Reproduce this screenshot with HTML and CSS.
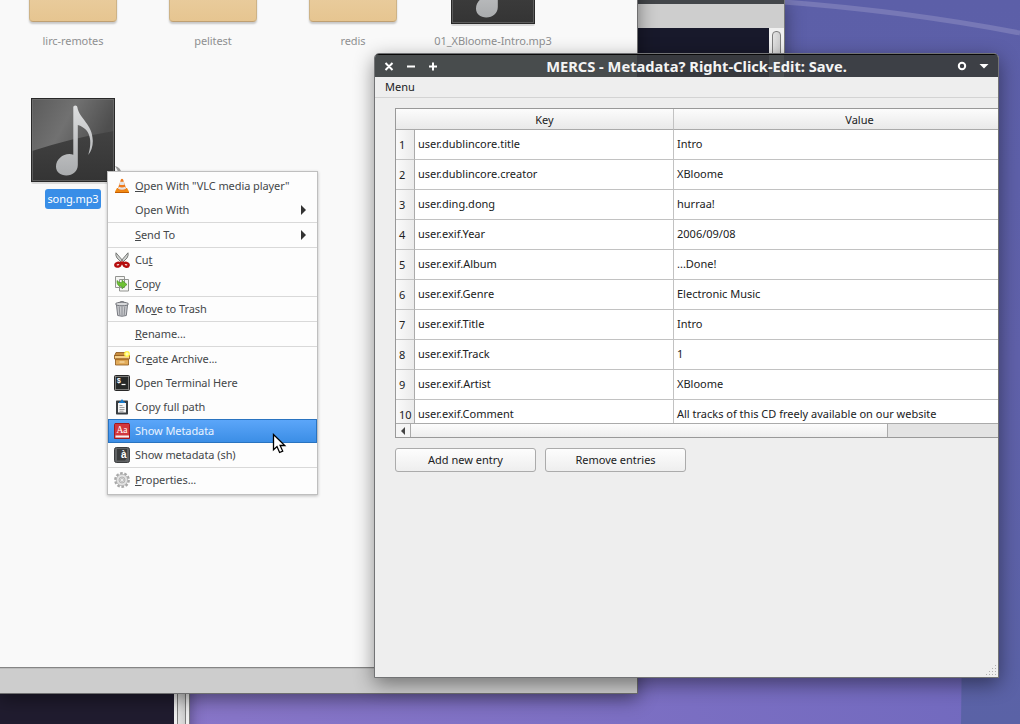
FILE: index.html
```html
<!DOCTYPE html>
<html lang="en">
<head>
<meta charset="utf-8">
<title>Desktop</title>
<link rel="stylesheet" href="styles.css">
</head>
<body>
<main class="desktop">
  <svg class="wallpaper" width="1020" height="724" viewBox="0 0 1020 724">
    <defs>
      <linearGradient id="wall" x1="0" y1="724" x2="1020" y2="300" gradientUnits="userSpaceOnUse"><stop offset="0" stop-color="#8c77cb"/><stop offset=".2" stop-color="#8775c8"/><stop offset=".85" stop-color="#7169be"/><stop offset="1" stop-color="#6c68b8"/></linearGradient>
      <linearGradient id="side" x1="0" y1="0" x2="0" y2="1"><stop offset="0" stop-color="#5c5fa8"/><stop offset=".5" stop-color="#6061aa"/><stop offset="1" stop-color="#5a62a6"/></linearGradient>
      <linearGradient id="note" x1="0" y1="0" x2="0" y2="1"><stop offset="0" stop-color="#dedfe0"/><stop offset="1" stop-color="#a9abad"/></linearGradient>
      <linearGradient id="tile" x1="0" y1="0" x2="0" y2="1"><stop offset="0" stop-color="#4b4b4b"/><stop offset="1" stop-color="#343434"/></linearGradient>
      <linearGradient id="shine" x1="0" y1="0" x2="1" y2=".35"><stop offset="0" stop-color="#5b5b5b"/><stop offset=".5" stop-color="#717171"/><stop offset="1" stop-color="#4e4e4e"/></linearGradient>
    </defs>
    <rect width="1020" height="724" fill="url(#wall)"/>
    <path d="M700 0h320v724H961q1-70 1-150L700 500z" fill="url(#side)"/>
    <path d="M770 1Q900 10 1020 33" fill="none" stroke="#7778b6" stroke-width="5"/>
  </svg>

  <section class="window terminal-top">
    <div class="term-title"></div>
    <div class="term-menu"></div>
    <div class="term-body"><div class="term-screen"></div><div class="term-scroll"><i class="knob"></i></div></div>
  </section>
  <section class="window terminal-bottom"><div class="term-screen"></div><div class="term-scroll"><i class="knob long"></i></div></section>

  <section class="window files">
    <div class="view">
      <div class="row row-first">
        <div class="file"><i class="folder"></i><span>lirc-remotes</span></div>
        <div class="file"><i class="folder"></i><span>pelitest</span></div>
        <div class="file"><i class="folder"></i><span>redis</span></div>
        <div class="file"><svg class="music" width="86" height="87"><use href="#music"/></svg><span>01_XBloome-Intro.mp3</span></div>
      </div>
      <div class="row">
        <div class="file selected">
          <svg class="music" width="86" height="87" viewBox="0 0 86 87">
            <g id="music">
              <rect x="1" y="4" width="84" height="83" rx="2" fill="#000" opacity=".12"/>
              <rect x="1.500" y="1.500" width="83" height="83" fill="url(#tile)" stroke="#292929"/>
              <path d="M2 2h82v32Q42 41 2 54z" fill="url(#shine)"/>
              <rect x="2.500" y="2.500" width="81" height="81" fill="none" stroke="#777" stroke-opacity=".6"/>
              <path d="M43.300 10q0-1.500 2-1.500t2 1.500c2 12 15.500 17 15.500 34q0 8-4.500 14c4-13 3-26-10.500-30v40c0 6-5 10.500-11.500 10.500-6 0-10.300-3.500-10.300-9 0-7 6.500-12.500 13.300-12.500 1.600 0 2.800.3 4 .8z" fill="url(#note)"/>
            </g>
          </svg>
          <span>song.mp3</span>
        </div>
      </div>
    </div>
    <div class="status"></div>
  </section>
  <svg class="peek" width="10" height="10" viewBox="0 0 10 10"><path d="M0 1q6 1 7 9H4Q3 5 0 1z" fill="#999"/></svg>

  <nav class="menu">
    <div class="item"><svg class="ico" viewBox="0 0 16 16"><path d="M1 13.500 3 10h10l2 3.500v1.500H1z" fill="#f08a12"/><path d="M1 14.500h14" stroke="#c35c00"/><path d="M7 1.200q1-1 2 0L12.500 11.500q-4.500 2.500-9 0z" fill="#ee7a1c"/><path d="m6.200 3.500-.9 3q2.700 1 5.400 0l-.9-3q-1.800.7-3.600 0zM4.700 8.700l-.7 2q4 2 8 0l-.7-2q-3.300 1.500-6.600 0z" fill="#e4e4e4"/></svg><span><u>O</u>pen With "VLC media player"</span></div>
    <div class="item"><i class="ico"></i><span>Open With</span><i class="arrow"></i></div>
    <hr>
    <div class="item"><i class="ico"></i><span><u>S</u>end To</span><i class="arrow"></i></div>
    <hr>
    <div class="item"><svg class="ico" viewBox="0 0 16 16"><path d="M2 .8Q1.300 3.500 3 6l5 5 1.500-1.500zM14 .8q.7 2.700-1 5.200l-5 5-1.500-1.500z" fill="#d0d2d0" stroke="#6c6e6b" stroke-width=".9"/><g fill="#f5dada" stroke="#b50d0d" stroke-width="2.400"><ellipse cx="3.900" cy="12.700" rx="2.600" ry="1.900" transform="rotate(-15 3.900 12.700)"/><ellipse cx="12.100" cy="12.700" rx="2.600" ry="1.900" transform="rotate(15 12.100 12.700)"/></g><path d="m5 11 3-2 3 2-3 2z" fill="#b50d0d"/></svg><span>Cu<u>t</u></span></div>
    <div class="item"><svg class="ico" viewBox="0 0 16 16"><path d="M1.500.5h9v11h-9zM5.500 3.500h9v11.500h-9z" fill="#f5f5f3" stroke="#929490"/><path d="M3 4.500q-.5 6 5 6v2.300l5-4.300-5-4.300v2.500Q4.800 7 3 4.500z" fill="#6fc234" stroke="#3e861b" stroke-width=".6"/></svg><span><u>C</u>opy</span></div>
    <hr>
    <div class="item"><svg class="ico" viewBox="0 0 16 16"><path d="M2.500 4h11l-1.200 10.500q-4.300 1.500-8.600 0z" fill="#c8c9cc" stroke="#777980"/><path d="M5.200 5.500 5.800 14M8 5.500v9M10.800 5.500l-.6 8.500" stroke="#85878d" stroke-width=".9"/><ellipse cx="8" cy="3" rx="6.500" ry="1.800" fill="#d8d9db" stroke="#74767c"/><path d="M5.500 2q0-1.500 2.500-1.500T10.500 2" fill="none" stroke="#74767c"/></svg><span>Mo<u>v</u>e to Trash</span></div>
    <hr>
    <div class="item"><i class="ico"></i><span><u>R</u>ename...</span></div>
    <hr>
    <div class="item"><svg class="ico" viewBox="0 0 16 16"><path d="M2 1.500h11l2.500 3.500H.5z" fill="#c98d3e" stroke="#8a5417" stroke-width=".8"/><path d="M.5 4.500h15v3.500H.5z" fill="#f6d08a" stroke="#8a5417" stroke-width=".8"/><path d="M1.500 8h13v6h-13z" fill="#e2ac5b" stroke="#8a5417" stroke-width=".8"/><path d="M2 8.700h12" stroke="#a6641c" stroke-width=".8"/><path d="M5.500 11h5" stroke="#fbe6bb"/><circle cx="13" cy="3" r="2.900" fill="#fff13a"/><path d="m13 0 .8 2.200L16 3l-2.200.8L13 6l-.8-2.200L10 3l2.200-.8z" fill="#fffcc0"/></svg><span>Cr<u>e</u>ate Archive...</span></div>
    <div class="item"><svg class="ico" viewBox="0 0 16 16"><rect x=".5" y=".5" width="15" height="15" rx="1" fill="#8f8f8d" stroke="#272727"/><path d="M1.800 1.800h12.400v12.400H1.800z" fill="#252827"/><text x="2.800" y="8.300" class="dollar">$</text><path d="M7.500 9.500h4" stroke="#fff" stroke-width="1.200"/></svg><span>Open Terminal Here</span></div>
    <div class="item"><svg class="ico" viewBox="0 0 16 16"><rect x="2" y="1.500" width="12" height="14" rx=".7" fill="#393d40"/><path d="M4 4h8v9.500H4z" fill="#f5f5f5"/><path d="M5.500 6.500h3M5.500 8.500h5M5.500 10.500h5M5.500 12.200h4" stroke="#959595" stroke-width=".9"/><path d="M5 4V2.800h1.300L8 0l1.700 2.800H11V4z" fill="#1479cb"/></svg><span>Copy full path</span></div>
    <div class="item active"><svg class="ico" viewBox="0 0 16 16"><path d="M.5 1.500 1 .5h14l.5 1v14H.5z" fill="#d2383d" stroke="#a0191f"/><path d="M1.500 12.500h13.500v2h-13.500z" fill="#f4f1f1"/><text x="2.400" y="9.500" class="aa">Aa</text></svg><span>Show Metadata</span></div>
    <div class="item"><svg class="ico" viewBox="0 0 16 16"><rect x=".5" y=".5" width="15" height="15" rx="2" fill="#606264" stroke="#3b3d3f"/><path d="M3 2h10v9l-2 2.500H3z" fill="#3a3c3d"/><text x="6.900" y="11" class="agrave">à</text></svg><span>Show metadata (sh)</span></div>
    <hr>
    <div class="item"><svg class="ico" viewBox="0 0 16 16"><circle cx="8" cy="8" r="6.600" fill="none" stroke="#a8a8a8" stroke-width="2.600" stroke-dasharray="2.600 1.547"/><circle cx="8" cy="8" r="5.700" fill="#e2e2e2" stroke="#b0b0b0" stroke-width=".8"/><circle cx="8" cy="8" r="3" fill="#d6d6d6" stroke="#acacac" stroke-width=".8"/><circle cx="8" cy="8" r="1.500" fill="#fafafa" stroke="#aaa" stroke-width=".6"/></svg><span><u>P</u>roperties...</span></div>
  </nav>

  <section class="window mercs">
    <header class="titlebar">
      <svg class="controls" width="64" height="23" viewBox="0 0 64 23"><path d="m10.500 8 7 7m0-7-7 7M32 11.500h8M54 11.500h8M58 7.500v8" stroke="#fff" stroke-width="2" fill="none"/></svg>
      <h1>MERCS - Metadata? Right-Click-Edit: Save.</h1>
      <svg class="controls-right" width="46" height="23" viewBox="0 0 46 23"><circle cx="10" cy="11" r="3.200" fill="none" stroke="#fff" stroke-width="2"/><path d="M27.500 9h9L32 13.500z" fill="#fff"/></svg>
    </header>
    <div class="menubar">Menu</div>
    <div class="content">
      <div class="table-frame">
        <div class="grid">
          <div class="head"></div><div class="head">Key</div><div class="head">Value</div>
          <b>1</b><span>user.dublincore.title</span><span>Intro</span>
          <b>2</b><span>user.dublincore.creator</span><span>XBloome</span>
          <b>3</b><span>user.ding.dong</span><span>hurraa!</span>
          <b>4</b><span>user.exif.Year</span><span>2006/09/08</span>
          <b>5</b><span>user.exif.Album</span><span>...Done!</span>
          <b>6</b><span>user.exif.Genre</span><span>Electronic Music</span>
          <b>7</b><span>user.exif.Title</span><span>Intro</span>
          <b>8</b><span>user.exif.Track</span><span>1</span>
          <b>9</b><span>user.exif.Artist</span><span>XBloome</span>
          <b>10</b><span>user.exif.Comment</span><span>All tracks of this CD freely available on our website</span>
        </div>
        <div class="hscroll"><i class="step"></i><i class="thumb"></i></div>
      </div>
      <div class="buttons"><button>Add new entry</button><button>Remove entries</button></div>
    </div>
    <svg class="grip" width="12" height="12" viewBox="0 0 12 12"><path d="M10 1h1v1h-1zM7 4h1v1H7zM10 4h1v1h-1zM4 7h1v1H4zM7 7h1v1H7zM10 7h1v1h-1zM1 10h1v1H1zM4 10h1v1H4zM7 10h1v1H7zM10 10h1v1h-1z" fill="#b0b0b0"/></svg>
  </section>

  <svg class="cursor" width="15" height="22" viewBox="0 0 15 22"><path d="M1.500 1.500v15.300l3.500-3.300 2.600 6 3.100-1.400-2.600-5.600h4.700z" fill="#fff" stroke="#000" stroke-width="1.300"/></svg>
</main>
</body>
</html>
```
FILE: styles.css
```css
* { box-sizing: border-box; }
body { margin: 0; font: 11px/16px "Noto Sans", sans-serif; color: #202122; }
.desktop { position: relative; width: 1020px; height: 724px; overflow: hidden; }
.wallpaper { display: block; }
.window { position: absolute; display: flex; flex-direction: column; }

.terminal-top { left: 600px; top: 0; width: 185px; height: 600px; border-right: 1px solid #77787b; box-shadow: 0 3px 18px rgba(0,0,0,.4); }
.term-title { height: 4px; background: #43464a; }
.term-menu { height: 24px; background: #cecece; }
.term-body { flex: 1; display: flex; }
.term-screen { flex: 1; background: #18192b; }
.term-scroll { width: 15px; padding: 3px 3px 0; background: #f0f0f0; display: flex; }
.knob { flex: 1; border: 1px solid #7d7d7d; border-radius: 4px; background: linear-gradient(90deg, #e2e2e2, #cfcfcf); }
.terminal-bottom { left: 0; top: 600px; width: 190px; height: 140px; flex-direction: row; border-right: 1px solid #79797c; box-shadow: 0 0 14px rgba(0,0,0,.4); }
.terminal-bottom .term-screen { background: #201c2f; }
.terminal-bottom .term-scroll { padding: 0 3px; }

.files { left: -1px; top: -40px; width: 639px; height: 734px; border: 1px solid #6f6f70; background: #f9f9f9; box-shadow: 0 5px 18px rgba(0,0,0,.45); }
.view { flex: 1; padding: 20px 0 0 3px; color: #8f9091; letter-spacing: -.08px; }
.row { display: flex; }
.row-first { height: 116px; }
.row-first .file { justify-content: flex-end; padding-bottom: 47px; }
.file { width: 140px; display: flex; flex-direction: column; align-items: center; }
.file span { white-space: nowrap; line-height: 18px; }
.row-first .file span { margin-top: 10px; }
.row-first .music { margin-bottom: -4px; }
.folder { width: 88px; height: 60px; flex: none; border: 1px solid #cdb387; border-bottom-color: #bfa073; border-radius: 0 0 4px 4px; background: linear-gradient(#edd5ae, #e6c590); box-shadow: 0 2px 2px rgba(0,0,0,.2); }
.music { display: block; flex: none; }
.selected span { margin-top: 5px; padding: 0 2px; border-radius: 3px; background: #398ee7; color: #fff; line-height: 20px; }
.status { height: 26px; border-top: 1px solid #858585; background: #cdcdcd; box-shadow: inset 0 1px #bcbcbc; }
.peek { position: absolute; left: 115px; top: 165px; }

.menu { position: absolute; left: 107px; top: 171px; width: 211px; height: 324px; padding: 2px 0; border: 1px solid #bfbfbf; background: #fdfdfd; color: #444749; box-shadow: 0 1px 3px rgba(0,0,0,.25); letter-spacing: -.08px; }
.item { height: 24px; display: flex; align-items: center; gap: 5px; padding: 0 11px 0 6px; white-space: nowrap; }
.item span { flex: 1; }
.menu hr { height: 1px; margin: 0; border: 0; background: #d9d9d9; }
.ico { width: 16px; height: 16px; flex: none; }
.arrow { border-left: 5px solid #333; border-top: 5px solid transparent; border-bottom: 5px solid transparent; }
u { text-decoration-thickness: 1px; text-underline-offset: 1px; }
.active { color: #e9f3ff; background: linear-gradient(#5da7fa, #3a8de5); box-shadow: inset 0 0 0 1px #2973c0; }
.dollar { font: bold 7px "Liberation Mono", monospace; fill: #fff; }
.aa { font: 9.5px "Liberation Serif", serif; fill: #fff; }
.agrave { font: bold 10px "Liberation Sans", sans-serif; fill: #fff; }
.cursor { position: absolute; left: 272px; top: 433px; }

.mercs { left: 374px; top: 53px; width: 625px; height: 625px; border: 1px solid #727375; border-radius: 5px 5px 0 0; background: #eee; overflow: hidden; box-shadow: 0 6px 20px rgba(0,0,0,.45); }
.titlebar { height: 23px; display: flex; align-items: center; justify-content: space-between; border-top: 1px solid #090909; background: linear-gradient(90deg, #484c4d 0 262px, #37393e 262px 394px, #494d50 394px 409px, #3d4046 409px); }
.titlebar h1 { flex: 1; margin: 0; padding: 0 0 0 2px; text-align: center; font-size: 14.67px; line-height: 22px; font-weight: 700; color: #f4f4f4; white-space: nowrap; }
.menubar { height: 21px; padding-left: 10px; line-height: 20px; border-bottom: 1px solid #d3d3d3; }
.content { padding: 10px 0 0 20px; }
.table-frame { height: 330px; border: 1px solid #999; border-right: 0; background: #fff; overflow: hidden; }
.grid { height: 314px; display: grid; grid-template-columns: 19px 259px 371px; grid-template-rows: 21px repeat(10, 30px); overflow: hidden; }
.grid > * { border-right: 1px solid #c2c2c2; border-bottom: 1px solid #c2c2c2; padding-left: 3px; line-height: 27px; white-space: nowrap; }
.grid b { font-weight: 400; line-height: 29px; background: linear-gradient(90deg, #fafafa, #ebebeb); border-right-color: #aaa; }
.grid .head { padding: 0 0 0 1px; text-align: center; line-height: 22px; border-bottom-color: #aaa; background: linear-gradient(#fcfcfc, #e9e9e9); }
.grid .head:first-child { border-right: 0; }
.hscroll { height: 14px; display: flex; border-top: 1px solid #aaa; background: #e3e3e3; }
.step { width: 15px; display: flex; align-items: center; justify-content: center; background: #f5f5f5; border-right: 1px solid #aaa; }
.step::before { content: ""; border-right: 4px solid #444; border-top: 4px solid transparent; border-bottom: 4px solid transparent; }
.thumb { width: 477px; border-right: 1px solid #aaa; background: linear-gradient(#fcfcfc, #ededed); }
.buttons { display: flex; gap: 9px; margin-top: 10px; }
.buttons button { width: 141px; height: 24px; padding: 0; border: 1px solid #ababab; border-radius: 3px; background: linear-gradient(#fdfdfd, #eee); font: inherit; color: inherit; }
.grip { position: absolute; right: 1px; bottom: 1px; }
```
